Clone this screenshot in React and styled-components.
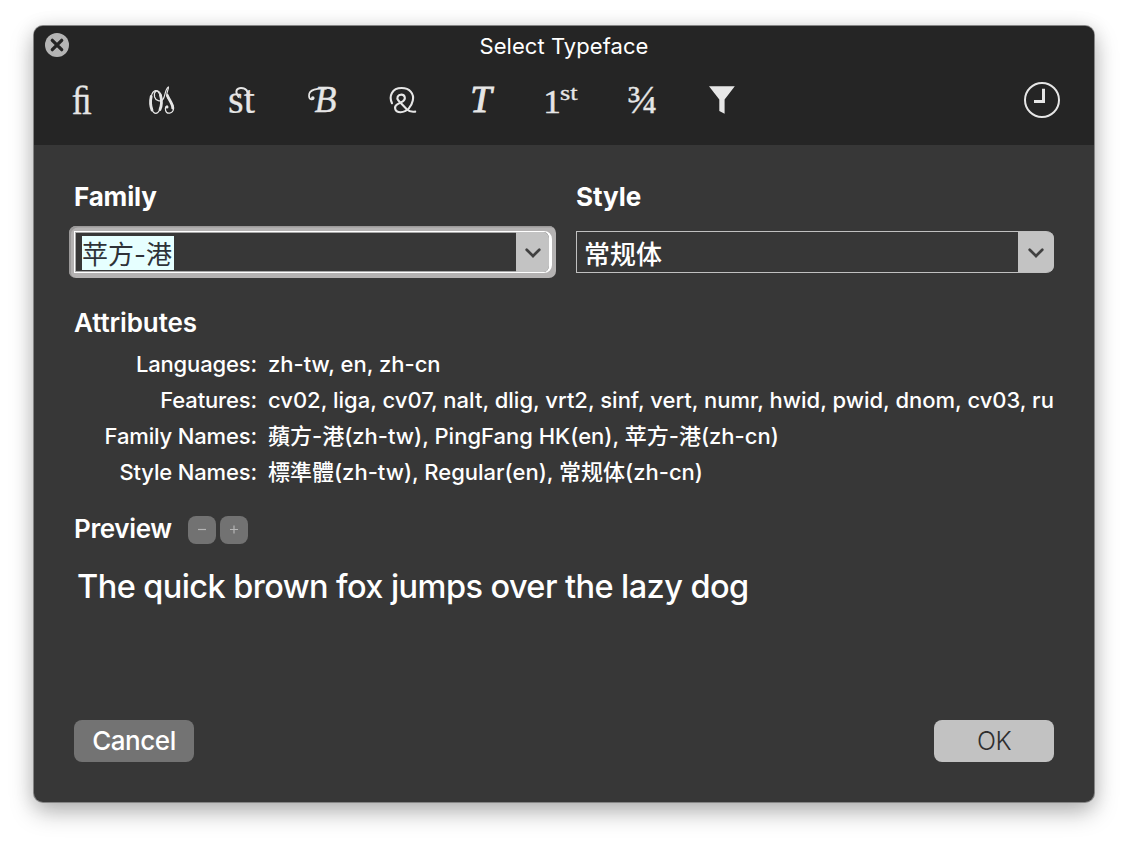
import React from "react";
import styled, { createGlobalStyle } from "styled-components";

const GlobalStyle = createGlobalStyle`
  * { box-sizing: border-box; }
  body { margin: 0; background: #fff; }
`;

const sans = `Inter, "Noto Sans CJK SC", sans-serif`;

const Page = styled.div`
  width: 1128px;
  height: 844px;
  padding: 26px 34px 42px;
  overflow: hidden;
  font-family: ${sans};
  color: #fff;
`;

const Dialog = styled.div`
  display: flex;
  flex-direction: column;
  width: 1060px;
  height: 776px;
  border-radius: 9px;
  overflow: hidden;
  background: #373737;
  box-shadow: 0 0 0 1px #858585, 0 10px 24px rgba(0, 0, 0, 0.27), 0 2px 20px rgba(0, 0, 0, 0.12);
`;

const Header = styled.header`
  height: 119px;
  background: #252525;
`;

const TitleBar = styled.div`
  display: grid;
  grid-template-columns: 60px 1fr 60px;
  height: 40px;
  padding: 7px 11px 0;
`;

const CloseButton = styled.button`
  width: 24px;
  height: 24px;
  padding: 0;
  border: 0;
  background: none;
  svg { display: block; }
`;

const Title = styled.h1`
  margin: 0;
  text-align: center;
  font-size: 22px;
  font-weight: 400;
  line-height: 27px;
  letter-spacing: ${(p) => p.$track || 0}px;
`;

const Toolbar = styled.div`
  display: flex;
  align-items: center;
  gap: 40px;
  height: 40px;
  margin-top: 14px;
  padding: 0 32px 0 28px;
`;

const ToolIcon = styled.svg`
  width: 40px;
  height: 40px;
  flex: none;
  overflow: visible;
  fill: #e6e6e6;
  stroke: none;
  font-family: "Liberation Serif", serif;
  margin-left: ${(p) => (p.$end ? "auto" : 0)};
`;

const Glyph = styled.text`
  stroke: #e6e6e6;
  stroke-width: ${(p) => p.$w || 0};
`;

const Pen = styled.g`
  fill: none;
  stroke: #e6e6e6;
  stroke-width: ${(p) => p.$w || 2};
  stroke-linecap: round;
  stroke-linejoin: round;
`;

const Body = styled.main`
  display: flex;
  flex-direction: column;
  flex: 1;
  padding: 36px 40px 40px;
`;

const Fields = styled.div`
  display: grid;
  grid-template-columns: 478px 478px;
  column-gap: 24px;
`;

const Heading = styled.h2`
  margin: 0;
  font-size: 26px;
  font-weight: ${(p) => p.$weight || 600};
  line-height: 32px;
  letter-spacing: ${(p) => p.$track || 0}px;
  white-space: nowrap;
`;

const Combo = styled.div`
  display: flex;
  height: 42px;
  margin-top: 18px;
  border-style: solid;
  border-color: ${(p) => (p.$focus ? "#fff" : "#c0c0c0")};
  border-width: ${(p) => (p.$focus ? "1px 3px 1px 1px" : "1px 0 1px 1px")};
  border-radius: 0 8px 8px 0;
  background: #373737;
`;

const FocusRing = styled.div`
  margin: 13px -4px -5px -5px;
  padding: 5px 4px 5px 5px;
  border-radius: 7px;
  background: #b4b2b2;
  box-shadow: inset 2px 1.5px 0 #9b9999;
  ${Combo} {
    margin-top: 0;
    box-shadow: inset 1px 1px 0 #a8a8a8, inset 0 -1px 0 #a8a8a8;
  }
`;

const ComboValue = styled.div`
  flex: 1;
  display: flex;
  align-items: center;
  padding-left: 7px;
  padding-top: ${(p) => (p.$selected ? 2 : 6)}px;
  font-size: 26px;
  font-weight: ${(p) => (p.$selected ? 400 : 500)};
  line-height: 34px;
`;

const Selection = styled.span`
  height: 34px;
  padding: 2px 0 0;
  width: 92px;
  white-space: nowrap;
  background: #e6ffff;
  color: #2e3238;
`;

const ComboArrow = styled.div`
  display: flex;
  align-items: center;
  justify-content: center;
  width: ${(p) => p.$w}px;
  padding-top: 1px;
  border-radius: 0 6px 6px 0;
  background: #c3c3c3;
`;

const AttributesHeading = styled(Heading)`
  margin-top: 34px;
`;

const AttributeList = styled.dl`
  display: grid;
  grid-template-columns: 183px 1fr;
  grid-auto-rows: 36px;
  column-gap: 11px;
  margin: 7px 0 0;
  font-size: 22px;
  font-weight: 500;
  line-height: 36px;
`;

const Term = styled.dt`
  text-align: right;
  white-space: nowrap;
  letter-spacing: -0.15px;
`;

const Detail = styled.dd`
  margin: 0;
  overflow: hidden;
  white-space: nowrap;
`;

const PreviewBar = styled.div`
  display: flex;
  align-items: center;
  height: 32px;
  margin-top: 23px;
`;

const PreviewHeading = styled(Heading)`
  width: 114px;
`;

const StepButton = styled.button`
  display: flex;
  align-items: center;
  justify-content: center;
  width: 28px;
  height: 28px;
  margin: 2px 4px 0 0;
  padding: 0;
  border: 0;
  border-radius: 8px;
  background: #727272;
`;

const Sample = styled.p`
  margin: 22px 0 0 3px;
  font-size: 32.5px;
  font-weight: 500;
  line-height: 40px;
  letter-spacing: -0.57px;
  white-space: nowrap;
`;

const Actions = styled.footer`
  display: flex;
  justify-content: space-between;
  margin-top: auto;
`;

const ActionButton = styled.button`
  width: 120px;
  height: 42px;
  padding: 0;
  border: 0;
  border-radius: 8px;
  font-family: ${sans};
  font-size: ${(p) => (p.$primary ? 25 : 26)}px;
  font-weight: ${(p) => (p.$primary ? 300 : 500)};
  line-height: 42px;
  letter-spacing: -0.45px;
  background: ${(p) => (p.$primary ? "#c2c2c2" : "#737373")};
  color: ${(p) => (p.$primary ? "#2f2f2f" : "#fff")};
`;

const Chevron = () => (
  <svg width="16" height="10" viewBox="0 0 16 10">
    <path d="M1.7 1.7 L8 8 L14.3 1.7" fill="none" stroke="#404040" strokeWidth="2.7" strokeLinecap="round" />
  </svg>
);

const attributes = [
  { term: "Languages:", value: "zh-tw, en, zh-cn" },
  {
    term: "Features:",
    value: "cv02, liga, cv07, nalt, dlig, vrt2, sinf, vert, numr, hwid, pwid, dnom, cv03, ruby",
  },
  { term: "Family Names:", value: "蘋方-港(zh-tw), PingFang HK(en), 苹方-港(zh-cn)" },
  { term: "Style Names:", value: "標準體(zh-tw), Regular(en), 常规体(zh-cn)" },
];

export default function App() {
  return (
    <Page>
      <GlobalStyle />
      <Dialog>
        <Header>
          <TitleBar>
            <CloseButton aria-label="Close">
              <svg width="24" height="24" viewBox="0 0 24 24">
                <circle cx="12" cy="12" r="12" fill="#b5b5b5" />
                <path d="M7.3 7.3 L16.7 16.7 M16.7 7.3 L7.3 16.7" stroke="#252525" strokeWidth="3.3" strokeLinecap="round" />
              </svg>
            </CloseButton>
            <Title $track={0.06}>Select Typeface</Title>
          </TitleBar>
          <Toolbar>
            <ToolIcon viewBox="0 0 40 40">
              <Glyph $w={0.3} x="9.8" y="34" fontSize="40" textLength="20" lengthAdjust="spacingAndGlyphs">ﬁ</Glyph>
            </ToolIcon>
            <ToolIcon viewBox="0 0 40 40">
              <Pen $w={1.2}>
                <ellipse cx="13.8" cy="22" rx="5.4" ry="11.3" />
                <path d="M18.5 13.5 C15 8 11.5 12 12.6 17 C13.8 21 18.5 22 20.8 19.5 C23.5 16.5 22.5 10 26.2 7.2" />
                <path d="M26.4 7.2 C26.8 10 24 12 25 16 C26.5 20.5 32 24 31.6 28.5 C31 34 24.6 34.5 23.6 30.5 C23 28 23.8 26 25.2 26.2" />
              </Pen>
              <Pen $w={2.8}>
                <path d="M9.2 16.5 C8.2 21 8.4 26 10 30" />
                <path d="M18.5 15 C19.8 20 19.5 26 18 29.5" />
                <path d="M25.4 15.5 C27 20 31 24 30.7 28" />
              </Pen>
              <circle cx="25" cy="27" r="1.5" />
            </ToolIcon>
            <ToolIcon viewBox="0 0 40 40">
              <Glyph $w={0.2} x="6" y="33.2" fontSize="41" textLength="26.8" lengthAdjust="spacingAndGlyphs">st</Glyph>
              <Pen $w={2}>
                <path d="M16.6 17 C12 10.5 15.5 7.9 19 7.9 C24.5 7.9 26.5 11.5 25.6 17" />
              </Pen>
            </ToolIcon>
            <ToolIcon viewBox="0 0 40 40">
              <Glyph $w={0.3} x="12.5" y="32.4" fontSize="37" fontStyle="italic" textLength="22" lengthAdjust="spacingAndGlyphs">B</Glyph>
              <Pen $w={1.7}>
                <path d="M24 8.8 C15 8 7 9.5 7 15.5 C7 20 10.5 20 11.3 18.3" />
              </Pen>
              <circle cx="10.8" cy="18.1" r="1.8" />
            </ToolIcon>
            <ToolIcon viewBox="0 0 40 40">
              <Pen $w={2.1}>
                <path d="M10 23.2 C6.6 16 10 8 19.6 8 C28 8 32.3 14 30.8 20.5 C29.6 26 25.6 32.2 18.5 32.2 C12.2 32.2 11.8 26.4 15.2 24.4 L20.8 21.4 C24.4 18.8 22.8 14.6 19.4 14.6 C15.8 14.6 14.2 17.8 16.4 20.6 L24.5 29 C27 31.4 30 32.2 33.2 31.6" />
              </Pen>
            </ToolIcon>
            <ToolIcon viewBox="0 0 40 40">
              <Glyph $w={0.9} x="8.3" y="32.3" fontSize="37" fontStyle="italic" textLength="21.3" lengthAdjust="spacingAndGlyphs">T</Glyph>
            </ToolIcon>
            <ToolIcon viewBox="0 0 40 40">
              <Glyph $w={0.6} x="1.6" y="32.5" fontSize="34.4">1</Glyph>
              <Glyph $w={0.3} x="18" y="20" fontSize="20.5" textLength="17.5" lengthAdjust="spacingAndGlyphs">st</Glyph>
            </ToolIcon>
            <ToolIcon viewBox="0 0 40 40">
              <Glyph $w={0.35} x="5.2" y="33.3" fontSize="39" textLength="30.5" lengthAdjust="spacingAndGlyphs">¾</Glyph>
            </ToolIcon>
            <ToolIcon viewBox="0 0 40 40">
              <path d="M7 6.2 H32.8 L22.6 19.5 V33.8 L17.3 31 V19.5 Z" />
            </ToolIcon>
            <ToolIcon $end viewBox="0 0 40 40">
              <circle cx="20" cy="20" r="17" fill="none" stroke="#e6e6e6" strokeWidth="2" />
              <path d="M20 8.7 H23 V23 H12 V20 H20 Z" />
            </ToolIcon>
          </Toolbar>
        </Header>
        <Body>
          <Fields>
            <div>
              <Heading $weight={750} $track={-0.15}>Family</Heading>
              <FocusRing>
                <Combo $focus>
                  <ComboValue $selected>
                    <Selection>苹方-港</Selection>
                  </ComboValue>
                  <ComboArrow $w={33}><Chevron /></ComboArrow>
                </Combo>
              </FocusRing>
            </div>
            <div>
              <Heading $weight={750} $track={-0.05}>Style</Heading>
              <Combo>
                <ComboValue>常规体</ComboValue>
                <ComboArrow $w={36}><Chevron /></ComboArrow>
              </Combo>
            </div>
          </Fields>
          <AttributesHeading $track={-0.1}>Attributes</AttributesHeading>
          <AttributeList>
            {attributes.map((a) => (
              <React.Fragment key={a.term}>
                <Term>{a.term}</Term>
                <Detail>{a.value}</Detail>
              </React.Fragment>
            ))}
          </AttributeList>
          <PreviewBar>
            <PreviewHeading $track={-0.35}>Preview</PreviewHeading>
            <StepButton aria-label="Smaller">
              <svg width="10" height="10" viewBox="0 0 10 10"><path d="M1 4.5 H9" stroke="#b5b5b5" strokeWidth="1.2" /></svg>
            </StepButton>
            <StepButton aria-label="Larger">
              <svg width="10" height="10" viewBox="0 0 10 10"><path d="M1 4.5 H9 M5 0.5 V8.5" stroke="#b5b5b5" strokeWidth="1.2" /></svg>
            </StepButton>
          </PreviewBar>
          <Sample>The quick brown fox jumps over the lazy dog</Sample>
          <Actions>
            <ActionButton>Cancel</ActionButton>
            <ActionButton $primary>OK</ActionButton>
          </Actions>
        </Body>
      </Dialog>
    </Page>
  );
}
